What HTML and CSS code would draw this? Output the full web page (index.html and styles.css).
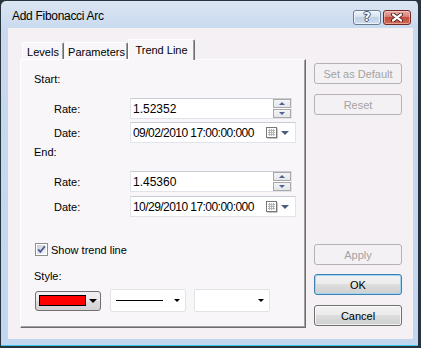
FILE: index.html
```html
<!DOCTYPE html>
<html>
<head>
  <meta charset="utf-8">
  <link rel="stylesheet" href="styles.css">
</head>
<body>
  <div class="window">
    <div class="titlebar">
      <span class="title">Add Fibonacci Arc</span>
      <div class="caption-buttons">
        <span class="caption-btn help">?</span>
        <span class="caption-btn close">
          <svg width="14" height="9" viewBox="0 0 14 9">
            <path d="M3 1.5 L11 7.5 M11 1.5 L3 7.5" stroke="#4a1510" stroke-width="4" stroke-linecap="round"/>
            <path d="M3 1.5 L11 7.5 M11 1.5 L3 7.5" stroke="#fff" stroke-width="2.2" stroke-linecap="round"/>
          </svg>
        </span>
      </div>
    </div>

    <div class="client">
      <div class="main">
        <div class="tabs">
          <span class="tab tab-levels">Levels</span>
          <span class="tab tab-params">Parameters</span>
          <span class="tab tab-trend active">Trend Line</span>
        </div>

        <div class="panel">
          <div class="section-label">Start:</div>
          <div class="field-row">
            <span class="field-label">Rate:</span>
            <div class="spin-box">
              <span class="value">1.52352</span>
              <div class="spinner">
                <span class="spin-btn up"></span>
                <span class="spin-btn down"></span>
              </div>
            </div>
          </div>
          <div class="field-row date-row">
            <span class="field-label">Date:</span>
            <div class="date-box">
              <span class="value date-value">09/02/2010 17:00:00:000</span>
              <svg class="cal-icon" width="12" height="12" viewBox="0 0 12 12">
                <rect x="1.5" y="1.5" width="10" height="10" fill="#8c8c8c"/>
                <rect x="0.5" y="0.5" width="10" height="10" fill="#fff" stroke="#777"/>
                <path d="M2 3.5h7M2 5.5h7M2 7.5h7M3.5 2v7M5.5 2v7M7.5 2v7" stroke="#b4b4b4"/>
              </svg>
              <span class="drop-arrow blue"></span>
            </div>
          </div>

          <div class="section-label end-label">End:</div>
          <div class="field-row">
            <span class="field-label">Rate:</span>
            <div class="spin-box">
              <span class="value">1.45360</span>
              <div class="spinner">
                <span class="spin-btn up"></span>
                <span class="spin-btn down"></span>
              </div>
            </div>
          </div>
          <div class="field-row date-row date-row-end">
            <span class="field-label">Date:</span>
            <div class="date-box">
              <span class="value date-value">10/29/2010 17:00:00:000</span>
              <svg class="cal-icon" width="12" height="12" viewBox="0 0 12 12">
                <rect x="1.5" y="1.5" width="10" height="10" fill="#8c8c8c"/>
                <rect x="0.5" y="0.5" width="10" height="10" fill="#fff" stroke="#777"/>
                <path d="M2 3.5h7M2 5.5h7M2 7.5h7M3.5 2v7M5.5 2v7M7.5 2v7" stroke="#b4b4b4"/>
              </svg>
              <span class="drop-arrow blue"></span>
            </div>
          </div>

          <label class="check-row">
            <svg class="checkbox" width="13" height="13" viewBox="0 0 13 13">
              <defs>
                <linearGradient id="cbg" x1="0" y1="0" x2="1" y2="1">
                  <stop offset="0" stop-color="#cbcfd5"/>
                  <stop offset="1" stop-color="#f6f6f6"/>
                </linearGradient>
              </defs>
              <rect x="0.5" y="0.5" width="12" height="12" fill="#fff" stroke="#8f8f8f"/>
              <rect x="2" y="2" width="9" height="9" fill="url(#cbg)"/>
              <path d="M3.2 6.4 L5.3 8.8 L9.8 3.4" fill="none" stroke="#4a5f97" stroke-width="1.8"/>
            </svg>
            <span>Show trend line</span>
          </label>

          <div class="section-label style-label">Style:</div>
          <div class="style-row">
            <div class="color-combo">
              <span class="swatch"></span>
              <span class="drop-arrow black"></span>
            </div>
            <div class="line-combo">
              <span class="line-sample"></span>
              <span class="drop-arrow small"></span>
            </div>
            <div class="line-combo">
              <span class="line-sample empty"></span>
              <span class="drop-arrow small"></span>
            </div>
          </div>
        </div>
      </div>

      <div class="side">
        <button class="btn" disabled>Set as Default</button>
        <button class="btn btn-reset" disabled>Reset</button>
        <div class="side-bottom">
          <button class="btn" disabled>Apply</button>
          <button class="btn btn-ok">OK</button>
          <button class="btn btn-cancel">Cancel</button>
        </div>
      </div>
    </div>
  </div>
</body>
</html>
```

FILE: styles.css
```css
body {
  margin: 0;
  background: #2e3338;
  font-family: "Liberation Sans", Arial, sans-serif;
  font-size: 11px;
  color: #000;
}

.window {
  width: 421px;
  height: 348px;
  box-sizing: border-box;
  border: 1px solid #27333f;
  border-right-width: 3px;
  border-bottom-width: 2px;
  border-radius: 6px 6px 0 0;
  background: linear-gradient(#dbe5f2, #c9daef 28px, #c2d6ef);
  box-shadow: inset 0 -1px 0 #39c6e4;
  padding: 0 5px 7px 7px;
  display: flex;
  flex-direction: column;
}

.titlebar {
  height: 27px;
  display: flex;
  align-items: center;
  justify-content: space-between;
}

.title {
  margin-left: 4px;
  margin-top: 2px;
  font-size: 12px;
  letter-spacing: -0.3px;
}

.caption-buttons {
  display: flex;
  gap: 2px;
  margin-right: 2px;
  margin-top: 9px;
  align-self: flex-start;
}

.caption-btn {
  width: 28px;
  height: 15px;
  box-sizing: border-box;
  border-radius: 3px;
  display: flex;
  align-items: center;
  justify-content: center;
  color: #fff;
  font-weight: bold;
}

.help {
  border: 1px solid #6b7c96;
  background: linear-gradient(#eef3fa, #d5e0ef 50%, #c1d1e7 50%, #cfdcee);
  box-shadow: inset 0 0 0 1px rgba(255, 255, 255, 0.6);
  font-family: "DejaVu Sans", sans-serif;
  font-size: 12px;
  line-height: 13px;
  text-shadow: 1px 0 0 #3e4e6a, -1px 0 0 #3e4e6a, 0 1px 0 #3e4e6a, 0 -1px 0 #3e4e6a;
}

.close {
  border: 1px solid #6f2a24;
  background: linear-gradient(#e8aea6, #d4796d 50%, #c24c3d 50%, #cf6a52);
  box-shadow: inset 0 0 0 1px rgba(255, 220, 210, 0.5);
}

.client {
  flex: 1;
  background: #f4f0f4;
  padding: 11px 0 11px 12px;
  display: flex;
  gap: 8px;
}

.main {
  width: 286px;
  display: flex;
  flex-direction: column;
}

.tabs {
  height: 20px;
  display: flex;
  align-items: flex-end;
  padding-left: 2px;
  position: relative;
  z-index: 1;
}

.tab {
  height: 17px;
  box-sizing: border-box;
  border-top: 1px solid #fff;
  border-left: 1px solid #fff;
  border-right: 1px solid #6e6e6e;
  box-shadow: inset -1px 0 0 #a0a0a0;
  border-radius: 2px 2px 0 0;
  background: #f8f6f8;
  display: flex;
  justify-content: center;
  padding-top: 3px;
}

.tab-levels {
  width: 42px;
}

.tab-params {
  width: 63px;
  margin-left: 1px;
}

.tab-trend {
  width: 67px;
}

.tab.active {
  height: 21px;
  margin-bottom: -1px;
  padding-top: 4px;
}

.panel {
  height: 269px;
  box-sizing: border-box;
  border-top: 1px solid #fff;
  border-left: 1px solid #fff;
  border-right: 1px solid #6e6e6e;
  border-bottom: 1px solid #6e6e6e;
  box-shadow: inset -1px -1px 0 #a0a0a0;
  background: #f8f6f8;
  padding: 10px 0 0 13px;
}

.section-label {
  height: 18px;
  line-height: 18px;
}

.field-row {
  display: flex;
  align-items: center;
  height: 21px;
  margin-top: 10px;
  padding-left: 20px;
}

.field-row.date-row {
  margin-top: 3px;
}

.field-row.date-row-end {
  margin-top: 4px;
}

.field-label {
  width: 76px;
}

.spin-box,
.date-box {
  height: 21px;
  box-sizing: border-box;
  background: #fff;
  border: 1px solid #e0e3ea;
  border-top-color: #c8ccd4;
  display: flex;
  align-items: center;
}

.spin-box {
  width: 162px;
}

.date-box {
  width: 166px;
}

.value {
  flex: 1;
  padding-left: 2px;
  font-size: 12px;
}

.date-value {
  letter-spacing: -0.55px;
}

.spinner {
  width: 18px;
  height: 19px;
  display: flex;
  flex-direction: column;
  gap: 1px;
}

.spin-btn {
  flex: 1;
  box-sizing: border-box;
  border: 1px solid #a9a9a9;
  background: linear-gradient(#f4f4f6, #e4e6ec);
  display: flex;
  align-items: center;
  justify-content: center;
}

.spin-btn::after {
  content: "";
  border-left: 3px solid transparent;
  border-right: 3px solid transparent;
}

.spin-btn.up::after {
  border-bottom: 3px solid #4f6391;
}

.spin-btn.down::after {
  border-top: 3px solid #4f6391;
}

.cal-icon {
  margin-right: 3px;
}

.drop-arrow {
  width: 0;
  height: 0;
  border-left: 4px solid transparent;
  border-right: 4px solid transparent;
  border-top: 4px solid #000;
}

.drop-arrow.blue {
  border-top-color: #4a5e7c;
  margin-right: 6px;
}

.drop-arrow.black {
  margin-left: 3px;
}

.drop-arrow.small {
  border-left-width: 3px;
  border-right-width: 3px;
  border-top-width: 3px;
}

.check-row {
  display: flex;
  align-items: center;
  gap: 3px;
  height: 15px;
  margin-top: 25px;
  margin-left: 1px;
}

.style-label {
  margin-top: 10px;
}

.style-row {
  display: flex;
  align-items: center;
  height: 23px;
  margin-top: 4px;
}

.color-combo {
  width: 66px;
  height: 20px;
  box-sizing: border-box;
  margin-left: 1px;
  border: 1px solid #707070;
  border-radius: 3px;
  background: linear-gradient(#f2f0f2, #ebe9eb 50%, #dddbdd 50%, #d3d1d3);
  display: flex;
  align-items: center;
  padding-left: 3px;
}

.swatch {
  width: 47px;
  height: 11px;
  box-sizing: border-box;
  border: 1px solid #000;
  background: #ff0000;
}

.line-combo {
  width: 76px;
  height: 23px;
  box-sizing: border-box;
  margin-left: 9px;
  border: 1px solid #e4e2e6;
  border-radius: 2px;
  background: #fff;
  display: flex;
  align-items: center;
  padding-left: 5px;
  padding-right: 5px;
}

.line-combo + .line-combo {
  margin-left: 8px;
}

.line-sample {
  width: 47px;
  height: 1px;
  background: #000;
  margin-right: auto;
}

.line-sample.empty {
  background: transparent;
}

.side {
  width: 88px;
  display: flex;
  flex-direction: column;
  padding-top: 24px;
  padding-bottom: 2px;
}

.btn {
  height: 21px;
  box-sizing: border-box;
  font-family: "Liberation Sans", Arial, sans-serif;
  font-size: 11px;
  color: #000;
  border: 1px solid #707070;
  border-radius: 3px;
  background: linear-gradient(#f2f2f2, #ebebeb 50%, #dddddd 50%, #cfcfcf);
  box-shadow: inset 0 0 0 1px rgba(255, 255, 255, 0.7);
  padding: 0;
}

.btn:disabled {
  color: #a3a3a3;
  border-color: #b5b2b5;
  background: #f4f1f4;
  box-shadow: none;
}

.btn-reset {
  margin-top: 10px;
}

.side-bottom {
  margin-top: auto;
  display: flex;
  flex-direction: column;
}

.btn-ok {
  margin-top: 9px;
  border-color: #3c7fb1;
  box-shadow: inset 0 0 0 1px #9fd7f3;
}

.btn-cancel {
  margin-top: 10px;
}
```
